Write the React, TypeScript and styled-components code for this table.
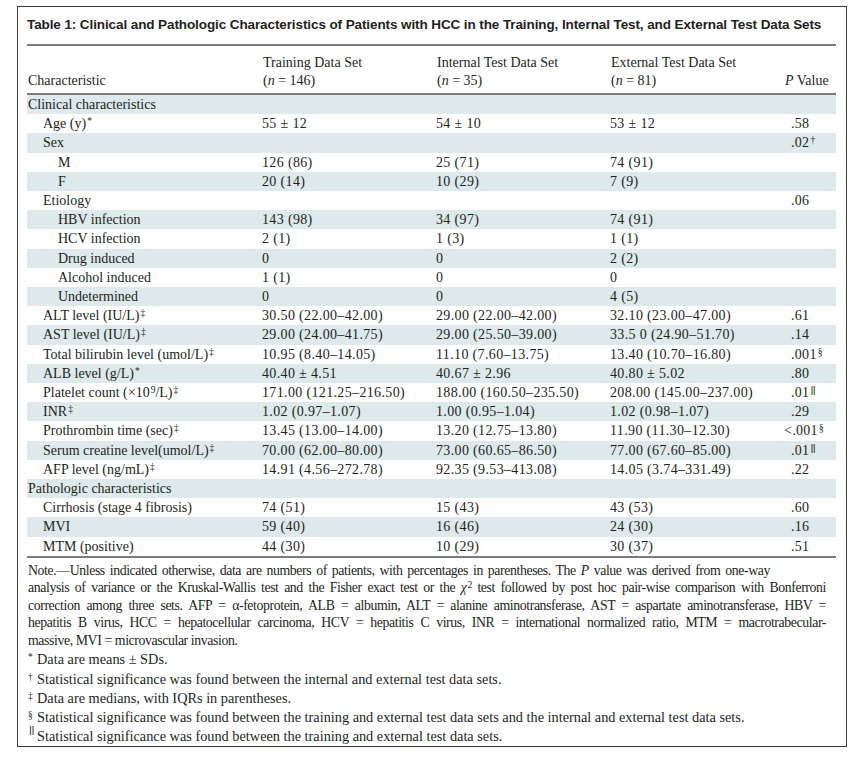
import React from 'react'
import styled, { createGlobalStyle } from 'styled-components'

const GlobalStyle = createGlobalStyle`
  body {
    margin: 0;
    background: #ffffff;
    color: #231f20;
    font-family: 'Liberation Serif', 'Times New Roman', serif;
  }
`

const Frame = styled.div`
  margin: 6px 0 0 17px;
  width: 830px;
  box-sizing: border-box;
  border: 1.5px solid #3a3a3a;
  padding: 9px 10px 1px 9px;
`

const Title = styled.h1`
  margin: 0;
  font-family: 'Liberation Sans', Arial, sans-serif;
  font-weight: 700;
  font-size: 13.5px;
  letter-spacing: -0.1px;
  line-height: 18px;
  color: #231f20;
  white-space: nowrap;
`

const Table = styled.table`
  width: 809px;
  margin-top: 10px;
  border-collapse: collapse;
  font-size: 14px;
  table-layout: fixed;
  border-top: 2px solid #7a7a7a;
  border-bottom: 2px solid #7a7a7a;
`

const HeadRow = styled.tr`
  border-bottom: 2px solid #7a7a7a;
`

const HeadCell = styled.th<{ $right?: boolean }>`
  font-weight: 400;
  text-align: ${p => (p.$right ? 'right' : 'left')};
  vertical-align: bottom;
  padding: 8px ${p => (p.$right ? '10px' : '0')} 3px 1px;
  line-height: 18px;
  white-space: nowrap;
`

const Row = styled.tr<{ $shaded: boolean }>`
  background: ${p => (p.$shaded ? '#dde9ea' : 'transparent')};
`

const LabelCell = styled.td<{ $level: number }>`
  padding: 0 0 0 ${p => 1 + p.$level * 15}px;
  height: 19.2px;
  line-height: 19.2px;
  white-space: nowrap;
`

const ValueCell = styled.td`
  padding: 0;
  height: 19.2px;
  line-height: 19.2px;
  letter-spacing: 0.35px;
  white-space: nowrap;
`

const PCell = styled.td`
  padding: 0 0 0 7px;
  height: 19.2px;
  line-height: 19.2px;
  letter-spacing: 0.3px;
  white-space: nowrap;
`

const Hang = styled.span`
  margin-left: -7px;
`

const Sup = styled.sup`
  font-size: 9.5px;
  line-height: 0;
  vertical-align: 4px;
  margin-left: 1px;
`

const Bars = styled.sup`
  font-family: 'DejaVu Sans', sans-serif;
  font-size: 8px;
  font-weight: 700;
  letter-spacing: -0.5px;
  line-height: 0;
  vertical-align: 4px;
  margin-left: 1px;
`

const Notes = styled.div`
  margin-top: 4px;
  padding-left: 1px;
`

const NoteLine = styled.div<{ $width?: number }>`
  font-size: 13.8px;
  line-height: 17.4px;
  letter-spacing: -0.4px;
  white-space: nowrap;
  width: ${p => (p.$width ? `${p.$width}px` : 'auto')};
  text-align: ${p => (p.$width ? 'justify' : 'left')};
  text-align-last: ${p => (p.$width ? 'justify' : 'auto')};
`

const Footnote = styled.div`
  font-size: 14.3px;
  line-height: 17px;
  margin-top: 2.3px;
  white-space: nowrap;
`

const FootMark = styled.span`
  display: inline-block;
  min-width: 9px;
  font-size: 9.5px;
  vertical-align: 4px;
  line-height: 0;
`

type DataRow = {
  level: number
  label: React.ReactNode
  sup?: string
  train?: string
  internal?: string
  external?: string
  p?: string
  psup?: string
}

const rows: DataRow[] = [
  { level: 0, label: 'Clinical characteristics' },
  { level: 1, label: 'Age (y)', sup: '*', train: '55 ± 12', internal: '54 ± 10', external: '53 ± 12', p: '.58' },
  { level: 1, label: 'Sex', p: '.02', psup: '†' },
  { level: 2, label: 'M', train: '126 (86)', internal: '25 (71)', external: '74 (91)' },
  { level: 2, label: 'F', train: '20 (14)', internal: '10 (29)', external: '7 (9)' },
  { level: 1, label: 'Etiology', p: '.06' },
  { level: 2, label: 'HBV infection', train: '143 (98)', internal: '34 (97)', external: '74 (91)' },
  { level: 2, label: 'HCV infection', train: '2 (1)', internal: '1 (3)', external: '1 (1)' },
  { level: 2, label: 'Drug induced', train: '0', internal: '0', external: '2 (2)' },
  { level: 2, label: 'Alcohol induced', train: '1 (1)', internal: '0', external: '0' },
  { level: 2, label: 'Undetermined', train: '0', internal: '0', external: '4 (5)' },
  { level: 1, label: 'ALT level (IU/L)', sup: '‡', train: '30.50 (22.00–42.00)', internal: '29.00 (22.00–42.00)', external: '32.10 (23.00–47.00)', p: '.61' },
  { level: 1, label: 'AST level (IU/L)', sup: '‡', train: '29.00 (24.00–41.75)', internal: '29.00 (25.50–39.00)', external: '33.5 0 (24.90–51.70)', p: '.14' },
  { level: 1, label: 'Total bilirubin level (umol/L)', sup: '‡', train: '10.95 (8.40–14.05)', internal: '11.10 (7.60–13.75)', external: '13.40 (10.70–16.80)', p: '.001', psup: '§' },
  { level: 1, label: 'ALB level (g/L)', sup: '*', train: '40.40 ± 4.51', internal: '40.67 ± 2.96', external: '40.80 ± 5.02', p: '.80' },
  {
    level: 1,
    label: (
      <>
        Platelet count (×10<Sup>9</Sup>/L)
      </>
    ),
    sup: '‡',
    train: '171.00 (121.25–216.50)',
    internal: '188.00 (160.50–235.50)',
    external: '208.00 (145.00–237.00)',
    p: '.01',
    psup: '||',
  },
  { level: 1, label: 'INR', sup: '‡', train: '1.02 (0.97–1.07)', internal: '1.00 (0.95–1.04)', external: '1.02 (0.98–1.07)', p: '.29' },
  { level: 1, label: 'Prothrombin time (sec)', sup: '‡', train: '13.45 (13.00–14.00)', internal: '13.20 (12.75–13.80)', external: '11.90 (11.30–12.30)', p: '<.001', psup: '§' },
  { level: 1, label: 'Serum creatine level(umol/L)', sup: '‡', train: '70.00 (62.00–80.00)', internal: '73.00 (60.65–86.50)', external: '77.00 (67.60–85.00)', p: '.01', psup: '||' },
  { level: 1, label: 'AFP level (ng/mL)', sup: '‡', train: '14.91 (4.56–272.78)', internal: '92.35 (9.53–413.08)', external: '14.05 (3.74–331.49)', p: '.22' },
  { level: 0, label: 'Pathologic characteristics' },
  { level: 1, label: 'Cirrhosis (stage 4 fibrosis)', train: '74 (51)', internal: '15 (43)', external: '43 (53)', p: '.60' },
  { level: 1, label: 'MVI', train: '59 (40)', internal: '16 (46)', external: '24 (30)', p: '.16' },
  { level: 1, label: 'MTM (positive)', train: '44 (30)', internal: '10 (29)', external: '30 (37)', p: '.51' },
]

const footnotes = [
  { mark: '*', text: 'Data are means ± SDs.' },
  { mark: '†', text: 'Statistical significance was found between the internal and external test data sets.' },
  { mark: '‡', text: 'Data are medians, with IQRs in parentheses.' },
  { mark: '§', text: 'Statistical significance was found between the training and external test data sets and the internal and external test data sets.' },
  { mark: '||', text: 'Statistical significance was found between the training and external test data sets.' },
]

function Mark({ sign }: { sign: string }) {
  return sign === '||' ? <Bars>||</Bars> : <Sup>{sign}</Sup>
}

function PValue({ p, psup }: { p?: string; psup?: string }) {
  if (!p) return null
  return (
    <>
      {p.startsWith('<') ? <Hang>{p}</Hang> : p}
      {psup && <Mark sign={psup} />}
    </>
  )
}

export default function App() {
  return (
    <>
      <GlobalStyle />
      <Frame>
        <Title>
          Table 1: Clinical and Pathologic Characteristics of Patients with HCC in the Training, Internal Test, and External Test Data Sets
        </Title>
        <Table>
          <colgroup>
            <col style={{ width: 235 }} />
            <col style={{ width: 174 }} />
            <col style={{ width: 174 }} />
            <col style={{ width: 174 }} />
            <col />
          </colgroup>
          <thead>
            <HeadRow>
              <HeadCell>Characteristic</HeadCell>
              <HeadCell>
                Training Data Set
                <br />(<i>n</i> = 146)
              </HeadCell>
              <HeadCell>
                Internal Test Data Set
                <br />(<i>n</i> = 35)
              </HeadCell>
              <HeadCell>
                External Test Data Set
                <br />(<i>n</i> = 81)
              </HeadCell>
              <HeadCell $right>
                <i>P</i> Value
              </HeadCell>
            </HeadRow>
          </thead>
          <tbody>
            {rows.map((r, i) => (
              <Row key={i} $shaded={i % 2 === 0}>
                <LabelCell $level={r.level}>
                  {r.label}
                  {r.sup && <Mark sign={r.sup} />}
                </LabelCell>
                <ValueCell>{r.train}</ValueCell>
                <ValueCell>{r.internal}</ValueCell>
                <ValueCell>{r.external}</ValueCell>
                <PCell>
                  <PValue p={r.p} psup={r.psup} />
                </PCell>
              </Row>
            ))}
          </tbody>
        </Table>
        <Notes>
          <NoteLine $width={742}>
            Note.—Unless indicated otherwise, data are numbers of patients, with percentages in parentheses. The <i>P</i> value was derived from one-way
          </NoteLine>
          <NoteLine $width={798}>
            analysis of variance or the Kruskal-Wallis test and the Fisher exact test or the <i>χ</i>
            <Sup>2</Sup> test followed by post hoc pair-wise comparison with Bonferroni
          </NoteLine>
          <NoteLine $width={798}>
            correction among three sets. AFP = α-fetoprotein, ALB = albumin, ALT = alanine aminotransferase, AST = aspartate aminotransferase, HBV =
          </NoteLine>
          <NoteLine $width={798}>
            hepatitis B virus, HCC = hepatocellular carcinoma, HCV = hepatitis C virus, INR = international normalized ratio, MTM = macrotrabecular-
          </NoteLine>
          <NoteLine>massive, MVI = microvascular invasion.</NoteLine>
          {footnotes.map(f => (
            <Footnote key={f.mark}>
              <FootMark>{f.mark === '||' ? <Bars>||</Bars> : f.mark}</FootMark>
              {f.text}
            </Footnote>
          ))}
        </Notes>
      </Frame>
    </>
  )
}
